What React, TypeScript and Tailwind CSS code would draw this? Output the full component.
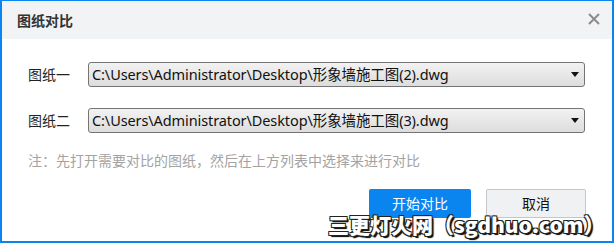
import { ChevronDown } from 'lucide-react'

const files = [
  { label: '图纸一', value: 'C:\\Users\\Administrator\\Desktop\\形象墙施工图(2).dwg' },
  { label: '图纸二', value: 'C:\\Users\\Administrator\\Desktop\\形象墙施工图(3).dwg' },
]

const cjk = "font-['Noto_Sans','Noto_Sans_CJK_SC',sans-serif]"

export default function App() {
  return (
    <div className={`relative w-[614px] h-[243px] bg-white border-[#0a84ee] border-t border-l-2 border-r-2 border-b-2 overflow-hidden ${cjk}`}>
      {/* title bar */}
      <div className="h-[38px] bg-[#f2f3f5] flex items-center justify-between pl-[15px] pr-[12px]">
        <span className="text-[14px] font-bold text-[#333] font-['Noto_Sans_CJK_SC',sans-serif]">图纸对比</span>
        <svg width="12" height="12" viewBox="0 0 12 12" className="mb-[2px]">
          <path d="M1 1L11 11M11 1L1 11" stroke="#8e8a8e" strokeWidth="2" />
        </svg>
      </div>

      <div className="pt-[23px] pl-[26px] pr-[26px]">
        <div className="flex flex-col gap-[21px]">
          {files.map((f) => (
            <div key={f.label} className="flex items-center">
              <span className="w-[60px] text-[14px] text-[#222] font-['Noto_Sans_CJK_SC',sans-serif]">{f.label}</span>
              <div className="w-[497px] h-[25px] flex items-center justify-between rounded-[3px] border border-[#747474] bg-gradient-to-b from-[#f2f2f2] to-[#dddddd] pl-[3px] pr-[5px]">
                <span className="text-[14.5px] text-[#111] leading-none tracking-[-0.1px]">{f.value}</span>
                <svg width="8" height="5" viewBox="0 0 8 5">
                  <path d="M0 0H8L4 5Z" fill="#111" />
                </svg>
              </div>
            </div>
          ))}
        </div>

        <p className="mt-[17px] text-[14px] leading-[20px] text-[#a3a3a3] font-['Noto_Sans_CJK_SC',sans-serif]">
          注：先打开需要对比的图纸，然后在上方列表中选择来进行对比
        </p>

        <div className="mt-[19px] flex justify-end gap-[15px]">
          <button className="w-[102px] h-[29px] rounded-[2px] bg-[#0a84ee] text-white text-[14px] font-['Noto_Sans_CJK_SC',sans-serif]">
            开始对比
          </button>
          <button className="w-[100px] h-[29px] rounded-[2px] border border-[#c6c6c6] bg-[#f0f1f3] text-[#111] text-[14px] font-['Noto_Sans_CJK_SC',sans-serif]">
            取消
          </button>
        </div>
      </div>

      {/* watermark */}
      <div className="absolute left-[326px] top-[208px] text-[21px] font-black text-white leading-[30px] whitespace-nowrap font-['Noto_Sans_CJK_SC',sans-serif] [text-shadow:1px_1px_0_#222,-1px_-1px_0_#222,1px_-1px_0_#222,-1px_1px_0_#222,2px_2px_1px_#000]">
        三更灯火网（sgdhuo.com）
      </div>
    </div>
  )
}
